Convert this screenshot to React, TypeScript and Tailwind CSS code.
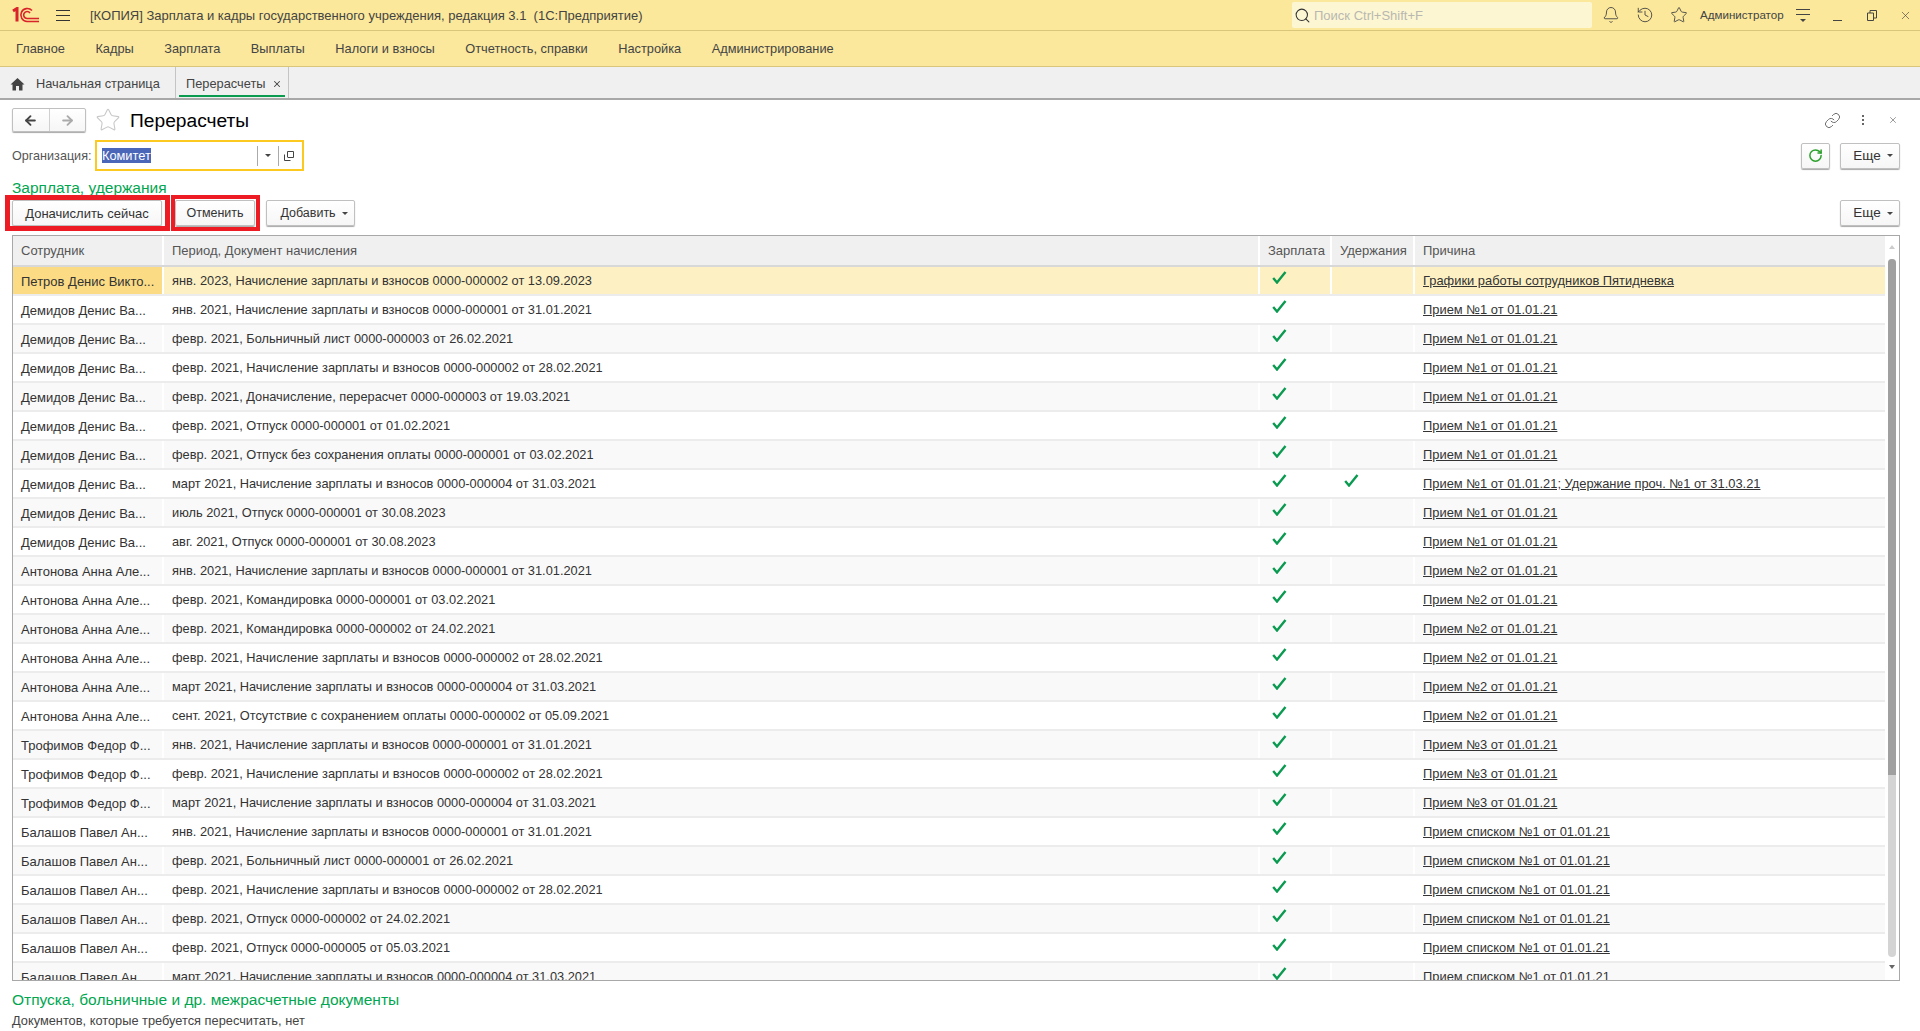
import React from 'react';
import { Bell, History, Star, Link, X, RotateCw, ArrowLeft, ArrowRight, Search } from 'lucide-react';

interface Row {
  name: string;
  doc: string;
  pay: boolean;
  hold: boolean;
  reason: string;
}

const demidov = 'Демидов Денис Ва...';
const antonova = 'Антонова Анна Але...';
const trofimov = 'Трофимов Федор Ф...';
const balashov = 'Балашов Павел Ан...';
const p1 = 'Прием №1 от 01.01.21';
const p2 = 'Прием №2 от 01.01.21';
const p3 = 'Прием №3 от 01.01.21';
const pl = 'Прием списком №1 от 01.01.21';

const make = (name: string, doc: string, reason: string, hold = false): Row => ({ name, doc, pay: true, hold, reason });

const rows: Row[] = [
  make('Петров Денис Викто...', 'янв. 2023, Начисление зарплаты и взносов 0000-000002 от 13.09.2023', 'Графики работы сотрудников Пятидневка'),
  make(demidov, 'янв. 2021, Начисление зарплаты и взносов 0000-000001 от 31.01.2021', p1),
  make(demidov, 'февр. 2021, Больничный лист 0000-000003 от 26.02.2021', p1),
  make(demidov, 'февр. 2021, Начисление зарплаты и взносов 0000-000002 от 28.02.2021', p1),
  make(demidov, 'февр. 2021, Доначисление, перерасчет 0000-000003 от 19.03.2021', p1),
  make(demidov, 'февр. 2021, Отпуск 0000-000001 от 01.02.2021', p1),
  make(demidov, 'февр. 2021, Отпуск без сохранения оплаты 0000-000001 от 03.02.2021', p1),
  make(demidov, 'март 2021, Начисление зарплаты и взносов 0000-000004 от 31.03.2021', 'Прием №1 от 01.01.21; Удержание проч. №1 от 31.03.21', true),
  make(demidov, 'июль 2021, Отпуск 0000-000001 от 30.08.2023', p1),
  make(demidov, 'авг. 2021, Отпуск 0000-000001 от 30.08.2023', p1),
  make(antonova, 'янв. 2021, Начисление зарплаты и взносов 0000-000001 от 31.01.2021', p2),
  make(antonova, 'февр. 2021, Командировка 0000-000001 от 03.02.2021', p2),
  make(antonova, 'февр. 2021, Командировка 0000-000002 от 24.02.2021', p2),
  make(antonova, 'февр. 2021, Начисление зарплаты и взносов 0000-000002 от 28.02.2021', p2),
  make(antonova, 'март 2021, Начисление зарплаты и взносов 0000-000004 от 31.03.2021', p2),
  make(antonova, 'сент. 2021, Отсутствие с сохранением оплаты 0000-000002 от 05.09.2021', p2),
  make(trofimov, 'янв. 2021, Начисление зарплаты и взносов 0000-000001 от 31.01.2021', p3),
  make(trofimov, 'февр. 2021, Начисление зарплаты и взносов 0000-000002 от 28.02.2021', p3),
  make(trofimov, 'март 2021, Начисление зарплаты и взносов 0000-000004 от 31.03.2021', p3),
  make(balashov, 'янв. 2021, Начисление зарплаты и взносов 0000-000001 от 31.01.2021', pl),
  make(balashov, 'февр. 2021, Больничный лист 0000-000001 от 26.02.2021', pl),
  make(balashov, 'февр. 2021, Начисление зарплаты и взносов 0000-000002 от 28.02.2021', pl),
  make(balashov, 'февр. 2021, Отпуск 0000-000002 от 24.02.2021', pl),
  make(balashov, 'февр. 2021, Отпуск 0000-000005 от 05.03.2021', pl),
  make(balashov, 'март 2021, Начисление зарплаты и взносов 0000-000004 от 31.03.2021', pl),
];

const menu = ['Главное', 'Кадры', 'Зарплата', 'Выплаты', 'Налоги и взносы', 'Отчетность, справки', 'Настройка', 'Администрирование'];

function Logo() {
  return (
    <svg width="30" height="16" viewBox="0 0 30 16" fill="none" stroke="#d8232a" className="ml-[12px] shrink-0">
      <path d="M1 4 L5 1.5 V14.5" strokeWidth="3" />
      <path d="M27 14.5 H15 A6.5 6.5 0 1 1 20 3.5" strokeWidth="1.6" />
      <path d="M27 11.5 H15 A3.5 3.5 0 1 1 18 6" strokeWidth="1.6" />
    </svg>
  );
}

function Check() {
  return (
    <svg width="15" height="13" viewBox="0 0 15 13" fill="none" stroke="#0a9a50" strokeWidth="2.4" className="ml-[12px] mt-[-6px]">
      <path d="M1.2 7 L5 11.5 L13.5 1" />
    </svg>
  );
}

function Caret() {
  return <span className="ml-[6px] inline-block h-0 w-0 border-x-[3px] border-t-[3px] border-x-transparent border-t-[#444]" />;
}

function Btn({ children, className = '' }: { children: React.ReactNode; className?: string }) {
  return (
    <button className={`flex h-[26px] items-center justify-center rounded-[2px] border border-[#c0c0c0] bg-gradient-to-b from-white to-[#f6f6f6] text-[#333] shadow-[0_1px_1px_#a8a8a8] ${className}`}>
      {children}
    </button>
  );
}

export default function App() {
  return (
    <div className="flex h-[1031px] w-[1920px] flex-col overflow-hidden bg-white font-['Liberation_Sans',Arial,sans-serif] text-[12.8px] leading-none text-[#333]">
      {/* title bar */}
      <div className="flex h-[31px] shrink-0 items-center border-b border-[#d9c67a] bg-[#fbe89a]">
        <Logo />
        <div className="ml-[14px] flex w-[14px] flex-col gap-[4px]">
          <span className="h-px w-full bg-[#333]" />
          <span className="h-px w-full bg-[#333]" />
          <span className="h-px w-full bg-[#333]" />
        </div>
        <span className="ml-[20px] text-[13px] text-[#444]">[КОПИЯ] Зарплата и кадры государственного учреждения, редакция 3.1&nbsp; (1С:Предприятие)</span>
        <div className="ml-auto flex h-[26px] w-[300px] items-center rounded-[2px] bg-[#fdf6d3] pl-[2px]">
          <Search size={17} strokeWidth={1.5} className="text-[#333]" />
          <span className="ml-[3px] text-[13px] text-[#b8b8b0]">Поиск Ctrl+Shift+F</span>
        </div>
        <Bell size={18} strokeWidth={1.2} className="ml-[10px] text-[#444]" />
        <History size={18} strokeWidth={1.2} className="ml-[16px] text-[#444]" />
        <Star size={18} strokeWidth={1.2} className="ml-[16px] text-[#444]" />
        <span className="ml-[12px] w-[82px] whitespace-nowrap text-[11.6px] text-[#444]">Администратор</span>
        <div className="ml-[14px] flex w-[14px] flex-col items-center gap-[4px]">
          <span className="h-px w-full bg-[#444]" />
          <span className="h-px w-full bg-[#444]" />
          <span className="h-0 w-0 border-x-[3px] border-t-[3px] border-x-transparent border-t-[#444]" />
        </div>
        <span className="ml-[23px] mt-[10px] h-px w-[9px] bg-[#444]" />
        <svg width="10" height="11" viewBox="0 0 10 11" fill="none" stroke="#444" className="ml-[25px]">
          <path d="M0.5 3 H6.5 V10.5 H0.5 Z M3 3 V0.5 H9.5 V8 H6.5" />
        </svg>
        <X size={13} strokeWidth={1.2} className="ml-[22px] mr-[8px] text-[#444]" />
      </div>

      {/* section menu */}
      <div className="flex h-[36px] shrink-0 items-center gap-[30.5px] border-b border-[#d9c67a] bg-[#fbe89d] pl-[16px] pt-[2px] text-[12.8px] text-[#444]">
        {menu.map(m => <span key={m}>{m}</span>)}
      </div>

      {/* tabs */}
      <div className="flex h-[33px] shrink-0 border-b-2 border-[#a8a8a8] bg-[#f0f0f0] text-[12.8px] text-[#444]">
        <div className="flex w-[176px] items-center border-r border-[#c4c4c4] pl-[10px] pt-[3px]">
          <svg width="15" height="14" viewBox="0 0 15 14" fill="#444">
            <path d="M7.5 1 L14.5 7.5 H12.5 V13.5 H9 V9 H6 V13.5 H2.5 V7.5 H0.5 Z" />
          </svg>
          <span className="ml-[11px]">Начальная страница</span>
        </div>
        <div className="relative flex w-[113px] items-center border-r border-[#c4c4c4] pl-[10px] pt-[3px]">
          <span>Перерасчеты</span>
          <X size={10} strokeWidth={2.5} className="ml-[7px] text-[#444]" />
          <span className="absolute bottom-[1px] left-[3px] h-[2px] w-[106px] bg-[#0a9a50]" />
        </div>
      </div>

      {/* form */}
      <div className="flex min-h-0 flex-1 flex-col pl-[12px] pr-[20px]">
        <div className="mt-[8px] flex h-[24px] shrink-0 items-center">
          <div className="flex h-[24px] w-[74px] rounded-[2px] border border-[#c0c0c0] bg-gradient-to-b from-white to-[#f6f6f6] shadow-[0_1px_1px_#a8a8a8]">
            <div className="flex flex-1 items-center justify-center border-r border-[#d0d0d0]">
              <ArrowLeft size={15} strokeWidth={3} className="text-[#444]" />
            </div>
            <div className="flex flex-1 items-center justify-center">
              <ArrowRight size={15} strokeWidth={3} className="text-[#aaa]" />
            </div>
          </div>
          <Star size={26} strokeWidth={1} className="ml-[9px] text-[#c8c8c8]" />
          <span className="ml-[9px] pt-[2px] text-[19.2px] text-black">Перерасчеты</span>
          <div className="ml-auto flex items-center text-[#555]">
            <Link size={17} strokeWidth={1.2} />
            <div className="ml-[21px] flex flex-col gap-[2px]">
              <span className="h-[2px] w-[2px] bg-[#666]" />
              <span className="h-[2px] w-[2px] bg-[#666]" />
              <span className="h-[2px] w-[2px] bg-[#666]" />
            </div>
            <X size={10} strokeWidth={1.4} className="ml-[24px] mr-[2px]" />
          </div>
        </div>

        <div className="mt-[8px] flex h-[31px] shrink-0 items-center">
          <span className="w-[83px] pt-[2px] text-[12.6px] text-[#555]">Организация:</span>
          <div className="flex h-[31px] w-[209px] items-center border-2 border-[#fbc91f] bg-white">
            <span className="ml-[5px] bg-[#4a66b8] text-[12.8px] leading-[15px] text-white">Комитет</span>
            <div className="ml-auto flex h-[20px] items-center border-l border-[#aaa] px-[7px]">
              <span className="h-0 w-0 border-x-[3px] border-t-[3px] border-x-transparent border-t-[#444]" />
            </div>
            <div className="mr-[3px] flex h-[20px] w-[21px] items-center justify-center border-l border-[#aaa]">
              <svg width="10" height="10" viewBox="0 0 10 10" fill="none" stroke="#444">
                <path d="M3.5 6 V0.5 H9.5 V6.5 H3.5 M0.5 3.5 V9.5 H6.5" />
              </svg>
            </div>
          </div>
          <div className="ml-auto flex gap-[10px]">
            <Btn className="w-[29px]"><RotateCw size={15} strokeWidth={2.4} className="text-[#2ca02c]" /></Btn>
            <Btn className="w-[60px] pl-[6px] text-[13.5px]">Еще<Caret /></Btn>
          </div>
        </div>

        <div className="mt-[9px] shrink-0 text-[15.5px] leading-[16px] text-[#00a650]">Зарплата, удержания</div>

        <div className="mt-[4px] flex shrink-0 items-center">
          <div className="relative">
            <Btn className="w-[150px] text-[13px]">Доначислить сейчас</Btn>
            <span className="pointer-events-none absolute -top-[5px] -bottom-[5px] -left-[7px] -right-[8px] border-[5px] border-[#ed1c24]" />
          </div>
          <div className="relative ml-[13px]">
            <Btn className="w-[80px] text-[12.5px]">Отменить</Btn>
            <span className="pointer-events-none absolute -top-[5px] -bottom-[5px] -left-[4px] -right-[5px] border-[4px] border-[#ed1c24]" />
          </div>
          <Btn className="ml-[11px] w-[89px] pl-[7px] text-[12.5px]">Добавить<Caret /></Btn>
          <Btn className="ml-auto w-[60px] pl-[6px] text-[13.5px]">Еще<Caret /></Btn>
        </div>

        {/* table */}
        <div className="mt-[9px] flex h-[746px] shrink-0 border border-[#a8a8a8]">
          <div className="min-w-0 flex-1 overflow-hidden">
            <div className="flex h-[31px] border-b-[2px] border-[#d8d8d8] text-[13px] text-[#555]">
              <div className="flex w-[151px] items-center border-r-2 border-white bg-[#f0f0f0] pl-[8px]">Сотрудник</div>
              <div className="flex w-[1096px] items-center border-r-2 border-white bg-[#f0f0f0] pl-[8px]">Период, Документ начисления</div>
              <div className="flex w-[72px] items-center border-r-2 border-white bg-[#f0f0f0] pl-[8px]">Зарплата</div>
              <div className="flex w-[83px] items-center border-r-2 border-white bg-[#f0f0f0] pl-[8px]">Удержания</div>
              <div className="flex flex-1 items-center bg-[#f0f0f0] pl-[8px]">Причина</div>
            </div>
            {rows.map((r, i) => (
              <div
                key={i}
                className={`flex h-[29px] items-center border-b-2 border-[#ececec] text-[12.8px] text-[#333] ${
                  i === 0 ? 'bg-[#fdf1c3]' : i % 2 === 0 ? 'bg-[#f9f9f9]' : 'bg-white'
                }`}
              >
                <div className={`flex h-full w-[151px] items-center border-r-2 border-white pl-[8px] pt-[2px] text-[13px] ${i === 0 ? 'bg-[#fbdc85]' : ''}`}>{r.name}</div>
                <div className="flex h-full w-[1096px] items-center border-r-2 border-white pl-[8px] pt-[2px]">{r.doc}</div>
                <div className="flex h-full w-[72px] items-center border-r-2 border-white">{r.pay && <Check />}</div>
                <div className="flex h-full w-[83px] items-center border-r-2 border-white">{r.hold && <Check />}</div>
                <div className="flex h-full flex-1 items-center pl-[8px] pt-[2px] text-[12.9px]"><span className="underline">{r.reason}</span></div>
              </div>
            ))}
          </div>
          {/* scrollbar */}
          <div className="flex w-[14px] shrink-0 flex-col items-center bg-white pt-[9px]">
            <span className="h-0 w-0 border-x-[3px] border-b-[4px] border-x-transparent border-b-[#ccc]" />
            <div className="mt-[10px] flex h-[698px] w-[8px] flex-col overflow-hidden rounded-[4px] bg-[#d4d4d4]">
              <div className="h-[516px] w-full bg-[#a0a0a0]" />
            </div>
            <span className="mt-[8px] h-0 w-0 border-x-[3px] border-t-[4px] border-x-transparent border-t-[#666]" />
          </div>
        </div>

        <div className="mt-[11px] shrink-0 text-[15.5px] leading-[16px] text-[#00a650]">Отпуска, больничные и др. межрасчетные документы</div>
        <div className="mt-[7px] shrink-0 text-[12.8px] text-[#444]">Документов, которые требуется пересчитать, нет</div>
      </div>
    </div>
  );
}
